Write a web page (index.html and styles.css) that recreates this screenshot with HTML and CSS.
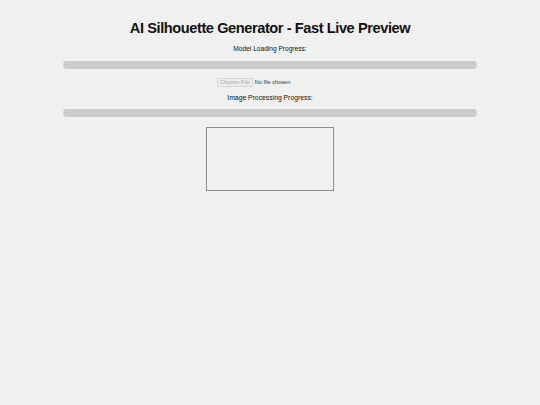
FILE: index.html
```html
<!DOCTYPE html>
<html>
<head>
<meta charset="utf-8">
<link rel="stylesheet" href="styles.css">
</head>
<body>
<div class="page">
  <h1 class="title">AI Silhouette Generator - Fast Live Preview</h1>
  <div class="label label-model">Model Loading Progress:</div>
  <div class="bar bar-model"></div>
  <div class="file">
    <span class="file-btn">Choose File</span>
    <span class="file-name">No file chosen</span>
  </div>
  <div class="label label-image">Image Processing Progress:</div>
  <div class="bar bar-image"></div>
  <div class="preview"></div>
</div>
</body>
</html>
```
FILE: styles.css
```css
html, body {
  margin: 0;
  padding: 0;
  background: #f0f0f0;
}
body {
  font-family: "Liberation Sans", Arial, sans-serif;
  color: #111;
}
.page {
  width: 414px;
  margin: 0 auto;
  display: flex;
  flex-direction: column;
  align-items: center;
  padding-top: 19px;
}
.title {
  margin: 0;
  font-size: 14.6px;
  letter-spacing: -0.42px;
  font-weight: bold;
  line-height: 18px;
  color: #111;
}
.label {
  font-size: 6.6px;
  line-height: 8px;
  color: #111;
}
.label-model {
  margin-top: 8px;
}
.label-image {
  margin-top: 7px;
  font-size: 6.8px;
}
.bar {
  width: 414px;
  height: 8px;
  border-radius: 4px;
  background: #cccccc;
}
.bar-model {
  margin-top: 8px;
}
.bar-image {
  margin-top: 7px;
}
.file {
  width: 106px;
  display: flex;
  align-items: center;
  justify-content: flex-start;
  gap: 2px;
  margin-top: 9px;
  font-size: 5.6px;
  line-height: 7px;
}
.file-btn {
  border: 1px solid #d6d6d6;
  background: #ececec;
  color: #aaa;
  padding: 0 2px;
  border-radius: 1px;
}
.file-name {
  color: #333;
}
.preview {
  margin-top: 10px;
  width: 126px;
  height: 62px;
  border: 1px solid #8f8f8f;
  box-shadow: 0 1px 1px rgba(0,0,0,0.15);
}
```
